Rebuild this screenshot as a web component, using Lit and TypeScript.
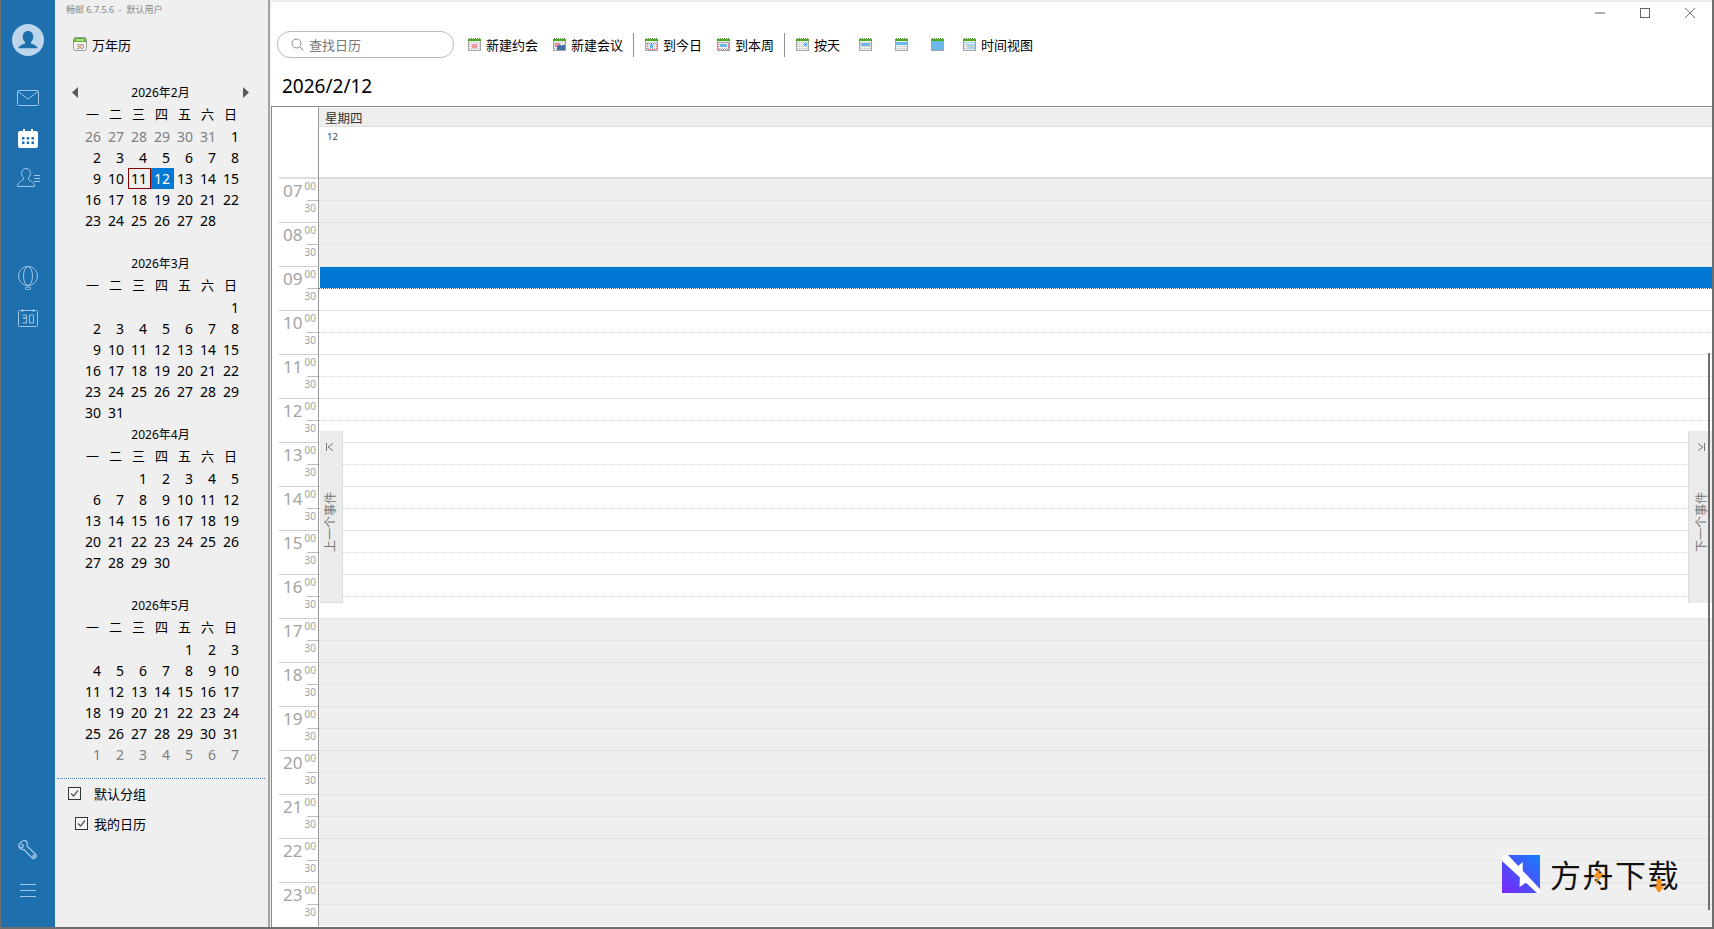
import { LitElement, html, css, svg } from "lit";
import { customElement } from "lit/decorators.js";

const WEEK = ["一", "二", "三", "四", "五", "六", "日"];
type Cell = { t: string; cls?: string };
function month(title: string, offset: number, days: number, prev: number[] = [], next: number[] = []) {
  const cells: Cell[] = [];
  prev.forEach((d) => cells.push({ t: String(d), cls: "muted" }));
  for (let i = 0; i < offset - prev.length; i++) cells.push({ t: "" });
  for (let d = 1; d <= days; d++) {
    let cls = "";
    if (title === "2026年2月" && d === 11) cls = "today";
    if (title === "2026年2月" && d === 12) cls = "sel";
    cells.push({ t: String(d), cls });
  }
  next.forEach((d) => cells.push({ t: String(d), cls: "muted" }));
  return { title, cells };
}
const MONTHS = [
  month("2026年2月", 6, 28, [26, 27, 28, 29, 30, 31]),
  month("2026年3月", 6, 31),
  month("2026年4月", 2, 30),
  month("2026年5月", 4, 31, [], [1, 2, 3, 4, 5, 6, 7]),
];
const HOURS = Array.from({ length: 17 }, (_, i) => i + 7);

function tool(inner: unknown) {
  const ticks = [2, 4, 6, 8, 10, 12];
  const dots: unknown[] = [];
  for (let y = 4; y < 13; y += 2) for (let x = 1; x < 13; x += 2) dots.push(svg`<rect x=${x} y=${y} width="1" height="1" fill="#bdbdbd"/>`);
  return html`<svg class="ti" width="13" height="13" viewBox="0 0 13 13" shape-rendering="crispEdges">
    <rect x="0" y="1" width="13" height="12" fill="#f1f1f1"/>
    ${dots}
    <rect x="0" y="1" width="13" height="2" fill="#4aa91c"/>
    ${ticks.map((x) => svg`<rect x=${x - 1} y="0" width="1" height="1" fill="#6b8a5a"/>`)}
    ${inner}
    <rect x="0" y="12" width="13" height="1" fill="#a5a5a5"/>
    <rect x="0" y="3" width="1" height="10" fill="#a5a5a5"/>
    <rect x="12" y="3" width="1" height="10" fill="#a5a5a5"/>
  </svg>`;
}
const I = {
  newAppt: tool(svg`<rect x="4" y="6" width="5" height="4" fill="#ef9aa5"/>`),
  newMeet: tool(svg`<rect x="2" y="5" width="5" height="4" fill="#ef8f9a"/><circle cx="6" cy="9" r="2" fill="#3f6ea8"/><circle cx="10" cy="9" r="2" fill="#3f6ea8"/><rect x="4" y="10" width="9" height="3" fill="#3f6ea8"/>`),
  today: tool(svg`<rect x="2" y="5" width="9" height="6" fill="none" stroke="#e8606c" stroke-dasharray="1 1"/><rect x="5" y="6" width="3" height="4" fill="#68b8ea"/>`),
  week: tool(svg`<rect x="1.5" y="4.5" width="10" height="7" fill="none" stroke="#e8606c" stroke-dasharray="1 1"/><rect x="3" y="6" width="7" height="3" fill="#68b8ea"/>`),
  day: tool(svg`<rect x="8" y="5" width="3" height="3" fill="#68b8ea"/>`),
  wk: tool(svg`<rect x="2" y="5" width="9" height="3" fill="#68b8ea"/>`),
  mo: tool(svg`<rect x="1" y="4" width="11" height="3" fill="#68b8ea"/>`),
  yr: tool(svg`<rect x="1" y="3" width="11" height="9" fill="#68b8ea"/>`),
  time: tool(svg`<rect x="1" y="4" width="11" height="1" fill="#9fd0ee"/><rect x="4" y="6" width="8" height="2" fill="#9fd0ee"/><rect x="4" y="9" width="8" height="2" fill="#9fd0ee"/>`),
};

@customElement("app-root")
export class AppRoot extends LitElement {
  static styles = css`
    :host { display: block; width: 1714px; height: 929px; overflow: hidden; background: #efefef;
      font-family: "Noto Sans", "Noto Sans CJK SC", sans-serif; color: #000; }
    * { box-sizing: border-box; }
    .win { position: relative; display: flex; height: 929px; border-left: 1px solid #6f6f6f; border-right: 2px solid #6f6f6f; border-bottom: 2px solid #6f6f6f; }
    .rail { width: 54px; flex: none; background: #1d6fae; display: flex; flex-direction: column; padding: 20px 0 17px; }
    .ri { height: 40px; display: flex; align-items: center; justify-content: center; }
    .ri.m1 { margin-top: 18px; }
    .ri.m2 { margin-top: 60px; }
    .grow { flex: 1; }
    .panel { width: 215px; flex: none; border-right: 2px solid #a2a2a2; background: #efefef; display: flex; flex-direction: column; }
    .ver { height: 18px; margin-top: 1px; padding-left: 11px; font-size: 9px; line-height: 18px; color: #858585; white-space: nowrap; }
    .wnl { height: 28px; margin-top: 11px; padding-left: 18px; display: flex; align-items: center; gap: 5px; font-size: 13px; }
    .cals { margin-top: 23px; }
    .cal { height: 171px; }
    .ct { height: 22px; margin: 0 19px 0 17px; display: flex; align-items: center; justify-content: space-between; font-size: 12px; }
    .grid { margin-left: 27px; display: grid; grid-template-columns: repeat(7, 23px); grid-template-rows: 23px; grid-auto-rows: 21px; font-size: 14px; line-height: 21px; }
    .wd { line-height: 21px; font-size: 13px; text-align: center; padding-right: 2px; font-family: "Noto Sans CJK SC", sans-serif; }
    .d { text-align: right; padding-right: 4px; white-space: nowrap; }
    .muted { color: #808080; }
    .today { border: 1px solid #8b0000; line-height: 19px; padding-right: 3px; }
    .sel { background: #0078d4; color: #fff; }
    .groups { margin: 13px 3px 0 2px; border-top: 1px dotted #4a78b5; }
    .g { display: flex; align-items: center; height: 30px; font-size: 13px; }
    .g.a { margin-top: -1px; padding-left: 11px; gap: 13px; }
    .g.b { padding-left: 18px; gap: 6px; }
    .main { flex: 1; min-width: 0; margin-left: 1px; background: #fff; border-top: 2px solid #efefef; display: flex; flex-direction: column; }
    .ctl { height: 22px; display: flex; justify-content: flex-end; }
    .ctl span { width: 45px; display: flex; align-items: center; justify-content: center; }
    .tb { margin-top: 7px; height: 27px; padding-left: 6px; display: flex; align-items: center; gap: 14px; font-size: 13px; }
    .search { width: 177px; height: 27px; border: 1px solid #bbb; border-radius: 13px; display: flex; align-items: center; gap: 5px; padding-left: 13px; color: #777; }
    .it { display: flex; align-items: center; gap: 5px; white-space: nowrap; }
    .it.w { margin-right: 1px; }
    .ti { display: block; flex: none; }
    .only { padding: 0 4.5px; }
    .sep { width: 1px; height: 24px; background: #8f8f8f; margin: 0 -3px 0 -4px; }
    .title { height: 48px; padding: 15px 0 0 11px; font-size: 19px; line-height: 26px; }
    .frame { position: relative; flex: 1; min-height: 0; border-top: 1px solid #8a8a92; border-left: 1px solid #8a8a92; overflow: hidden; }
    .head { display: grid; grid-template-columns: 47px 1fr; height: 71px; }
    .corner { border-right: 1px solid #9a9a9a; }
    .hc { display: flex; flex-direction: column; }
    .dow { height: 19px; margin-top: 1px; background: #eeeeee; border-bottom: 1px solid #dedede; padding-left: 6px; font-size: 12.500px; line-height: 22px; color: #333; overflow: hidden; }
    .dnum { padding: 3px 0 0 8px; font-size: 9.500px; line-height: 14px; color: #444; }
    .row { display: grid; grid-template-columns: 47px 1fr; height: 44px; }
    .tc { border-right: 1px solid #9a9a9a; display: flex; flex-direction: column; color: #a3a3a3; }
    .tt { height: 22px; margin-left: 7px; border-top: 1px solid #cfcfcf; display: flex; justify-content: flex-end; padding-right: 2px; }
    .big { font-size: 17px; line-height: 22px; margin-top: 1px; }
    .sm { font-size: 10px; line-height: 10px; margin-left: 2px; margin-top: 2px; }
    .tb2 { height: 22px; display: flex; flex-direction: column; align-items: flex-end; }
    .tick { width: 11px; border-top: 1px solid #bdbdbd; }
    .th { font-size: 10px; line-height: 14px; padding: 0 2px 0 0; }
    .slot { display: flex; flex-direction: column; background: #fff; }
    .slot.off { background: #efefef; }
    .s1 { height: 22px; border-top: 1px solid #e2e2e2; }
    .s2 { height: 22px; border-top: 1px dotted #d6d6d6; }
    .s1.blue { background: linear-gradient(90deg, #fff 1px, #0078d4 1px); background-clip: padding-box; }
    .s2.blue { border-top-color: #0078d4; }
    .row.first .tt, .row.first .s1 { border-top: 2px solid #dedede; margin-top: -1px; height: 23px; }
    .side { position: absolute; top: 324px; width: 24px; height: 172px; background: #ebebeb; display: flex; flex-direction: column; align-items: center; color: #777; font-size: 12px; }
    .side.l { left: 48px; width: 23px; border-right: 1px solid #dcdcdc; border-bottom: 1px solid #dcdcdc; }
    .side.r { right: 0; border-left: 1px solid #dcdcdc; }
    .side svg { margin-top: 12px; }
    .side.l svg { margin-left: -3px; }
    .vt { margin-top: 41px; writing-mode: vertical-rl; text-orientation: sideways; transform: rotate(180deg); line-height: 14px; font-family: "Noto Sans CJK SC", sans-serif; }
    .side.l .vt { margin-left: -2px; }
    .scroll { position: absolute; right: 2px; top: 246px; bottom: 17px; width: 2px; background: #6f6f6f; }
    .mark { position: absolute; left: 1501px; top: 855px; display: flex; gap: 10px; align-items: center; }
    .mt { position: relative; display: block; font-family: "Noto Sans CJK SC", sans-serif; font-size: 31px; line-height: 38px; letter-spacing: 1.500px; color: #111; white-space: nowrap; }
    .bolt { position: absolute; left: 43px; top: 12px; }
    .arr { position: absolute; left: 104px; top: 24px; }
  `;

  private cal(m: { title: string; cells: Cell[] }) {
    const first = m.title === "2026年2月";
    return html`<div class="cal">
      <div class="ct">
        <svg width="7" height="11" viewBox="0 0 7 11" style="visibility:${first ? "visible" : "hidden"}"><path d="M6 0v11L0 5.5z" fill="#5a5a5a"/></svg>
        <span>${m.title}</span>
        <svg width="7" height="11" viewBox="0 0 7 11" style="visibility:${first ? "visible" : "hidden"}"><path d="M1 0v11l6-5.500z" fill="#5a5a5a"/></svg>
      </div>
      <div class="grid">
        ${WEEK.map((w) => html`<div class="wd">${w}</div>`)}
        ${m.cells.map((c) => html`<div class="d ${c.cls || ""}">${c.t}</div>`)}
      </div>
    </div>`;
  }

  private check() {
    return html`<svg width="13" height="13" viewBox="0 0 13 13" class="ti"><rect x=".5" y=".5" width="12" height="12" fill="#f5f5f5" stroke="#333"/><path d="M3 6.500l2.500 2.500L10 3.500" fill="none" stroke="#555" stroke-width="1.200"/></svg>`;
  }

  render() {
    const st = "#9fc6e6";
    return html`<div class="win">
      <div class="rail">
        <div class="ri"><svg width="32" height="32" viewBox="0 0 32 32"><circle cx="16" cy="16" r="16" fill="#bdd5ea"/><path d="M16 7c-3.300 0-5.300 2.700-5.300 5.800 0 2.200.9 4 2.300 5.200v1.400c-3 1.100-6.300 2.300-6.600 4.900h19.200c-.3-2.600-3.600-3.800-6.600-4.900V18c1.400-1.200 2.300-3 2.300-5.200C21.300 9.700 19.300 7 16 7z" fill="#1d6fae"/></svg></div>
        <div class="ri m1"><svg width="22" height="16" viewBox="0 0 22 16" fill="none" stroke=${st}><rect x=".5" y=".5" width="21" height="15" rx="1"/><path d="M1 1.500l10 7.500 10-7.500"/></svg></div>
        <div class="ri"><svg width="20" height="19" viewBox="0 0 20 19"><path d="M2 2h3V0h2v2h6V0h2v2h3a2 2 0 0 1 2 2v13a2 2 0 0 1-2 2H2a2 2 0 0 1-2-2V4a2 2 0 0 1 2-2z" fill="#fff"/><g fill="#1d6fae"><rect x="4" y="8" width="2.500" height="2.500"/><rect x="8.700" y="8" width="2.500" height="2.500"/><rect x="13.500" y="8" width="2.500" height="2.500"/><rect x="4" y="12.500" width="2.500" height="2.500"/><rect x="8.700" y="12.500" width="2.500" height="2.500"/><rect x="13.500" y="12.500" width="2.500" height="2.500"/></g></svg></div>
        <div class="ri"><svg width="23" height="20" viewBox="0 0 23 20" fill="none" stroke=${st}><path d="M9 .5c-2.800 0-4.400 2.200-4.400 4.800 0 2 .8 3.500 2 4.500v2c-2.500 1-5.800 2.400-6.100 6.700h17c-.3-4.300-3.600-5.700-6.100-6.700v-2c1.200-1 2-2.500 2-4.500C13.400 2.700 11.800.5 9 .5z"/><path d="M17 7.500h6M17 10.500h6M17 13.500h6"/></svg></div>
        <div class="ri m2"><svg width="20" height="24" viewBox="0 0 20 24" fill="none" stroke=${st}><circle cx="10" cy="10" r="9.500"/><ellipse cx="10" cy="10" rx="4.500" ry="9.500"/><rect x="7.500" y="21" width="5" height="2.800" rx="1"/></svg></div>
        <div class="ri"><svg width="20" height="18" viewBox="0 0 20 18" fill="none" stroke=${st}><rect x=".5" y="1.500" width="19" height="16" rx="1"/><path d="M4.500 0v3M15.500 0v3M4.500 6h4v3h-3.500h3.500v5h-4M11.500 6h4v8h-4z"/></svg></div>
        <div class="grow"></div>
        <div class="ri"><svg width="20" height="20" viewBox="0 0 20 20" fill="none" stroke=${st} stroke-width="1.300"><path d="M7.500.8C5 0 2 .9 1 3.200l3.500 2-.6 2.300-2.300.7L-.1 5C-.2 8 2 10 5 9.700l9.300 9.300c1.300 1 4.500-1.800 3.600-3.600L8.300 6C8.800 4 8.800 2.300 7.500.8z" transform="translate(1 .2) scale(.96)"/><circle cx="15.800" cy="16.200" r="1"/></svg></div>
        <div class="ri"><svg width="16" height="13" viewBox="0 0 16 13" stroke=${st}><path d="M0 .5h16M0 6.500h16M0 12.500h16"/></svg></div>
      </div>
      <div class="panel">
        <div class="ver">畅邮 6.7.5.6&nbsp; - &nbsp;默认用户</div>
        <div class="wnl">
          <svg width="14" height="14" viewBox="0 0 14 14"><rect x=".5" y=".5" width="13" height="13" rx="2" fill="#f3f3f3" stroke="#9a9a9a"/><path d="M1 5V2.500A1.500 1.500 0 0 1 2.500 1h9A1.500 1.500 0 0 1 13 2.500V5z" fill="#5fb525"/><rect x="3" y="2.500" width="8" height="1" fill="#fff"/><text x="7" y="12" font-size="7" text-anchor="middle" fill="#666" font-family="Noto Sans">30</text></svg>
          <span>万年历</span>
        </div>
        <div class="cals">${MONTHS.map((m) => this.cal(m))}</div>
        <div class="groups">
          <div class="g a">${this.check()}<span>默认分组</span></div>
          <div class="g b">${this.check()}<span>我的日历</span></div>
        </div>
      </div>
      <div class="main">
        <div class="ctl">
          <span><svg width="10" height="2" viewBox="0 0 10 2"><path d="M0 1h10" stroke="#666" stroke-width="1"/></svg></span>
          <span><svg width="10" height="10" viewBox="0 0 10 10"><rect x=".5" y=".5" width="9" height="9" fill="none" stroke="#666"/></svg></span>
          <span><svg width="10" height="10" viewBox="0 0 10 10"><path d="M0 0l10 10M10 0L0 10" stroke="#555" stroke-width=".8"/></svg></span>
        </div>
        <div class="tb">
          <div class="search"><svg width="13" height="13" viewBox="0 0 13 13" fill="none" stroke="#888"><circle cx="5.500" cy="5.500" r="4.500"/><path d="M9 9l3.500 3.500"/></svg><span>查找日历</span></div>
          <div class="it w">${I.newAppt}<span>新建约会</span></div>
          <div class="it">${I.newMeet}<span>新建会议</span></div>
          <div class="sep"></div>
          <div class="it w">${I.today}<span>到今日</span></div>
          <div class="it">${I.week}<span>到本周</span></div>
          <div class="sep"></div>
          <div class="it">${I.day}<span>按天</span></div>
          <div class="it only">${I.wk}</div>
          <div class="it only">${I.mo}</div>
          <div class="it only w">${I.yr}</div>
          <div class="it">${I.time}<span>时间视图</span></div>
        </div>
        <div class="title">2026/2/12</div>
        <div class="frame">
          <div class="head">
            <div class="corner"></div>
            <div class="hc"><div class="dow">星期四</div><div class="dnum">12</div></div>
          </div>
          ${HOURS.map((h, i) => html`<div class="row ${i === 0 ? "first" : ""}">
            <div class="tc">
              <div class="tt"><span class="big">${String(h).padStart(2, "0")}</span><span class="sm">00</span></div>
              <div class="tb2"><div class="tick"></div><div class="th">30</div></div>
            </div>
            <div class="slot ${h < 9 || h >= 17 ? "off" : ""}">
              <div class="s1 ${h === 9 ? "blue" : ""}"></div>
              <div class="s2 ${h === 9 ? "blue" : ""}"></div>
            </div>
          </div>`)}
          <div class="side l">
            <svg width="8" height="8" viewBox="0 0 8 8" fill="none" stroke="#777"><path d="M.5 0v8M7 .5L2 4l5 3.500"/></svg>
            <div class="vt">上一个事件</div>
          </div>
          <div class="side r">
            <svg width="8" height="8" viewBox="0 0 8 8" fill="none" stroke="#777"><path d="M7.500 0v8M1 .5L6 4 1 7.500"/></svg>
            <div class="vt">下一个事件</div>
          </div>
          <div class="scroll"></div>
        </div>
      </div>
      <div class="mark">
        <svg width="38" height="38" viewBox="0 0 38 38"><defs><linearGradient id="lg" x1="1" y1="0" x2="0" y2="1"><stop offset="0" stop-color="#1580fb"/><stop offset="1" stop-color="#7b26fa"/></linearGradient></defs><rect width="38" height="38" fill="url(#lg)"/><path d="M0 0h6l32 34v4h-3L0 6z" fill="#fff"/><path d="M20.700 7v11l-7-5zM17.500 32l.5-12 7 7z" fill="#fff"/></svg>
        <span class="mt">方舟下载
          <svg class="bolt" width="11" height="17" viewBox="0 0 13 22" preserveAspectRatio="none"><path d="M9 0L0 13h5l-2 9 10-14H7z" fill="#f7941d"/></svg>
          <svg class="arr" width="10" height="14" viewBox="0 0 12 15" preserveAspectRatio="none"><path d="M3 0h6v8h3l-6 7-6-7h3z" fill="#f7941d"/></svg>
        </span>
      </div>
    </div>`;
  }
}
